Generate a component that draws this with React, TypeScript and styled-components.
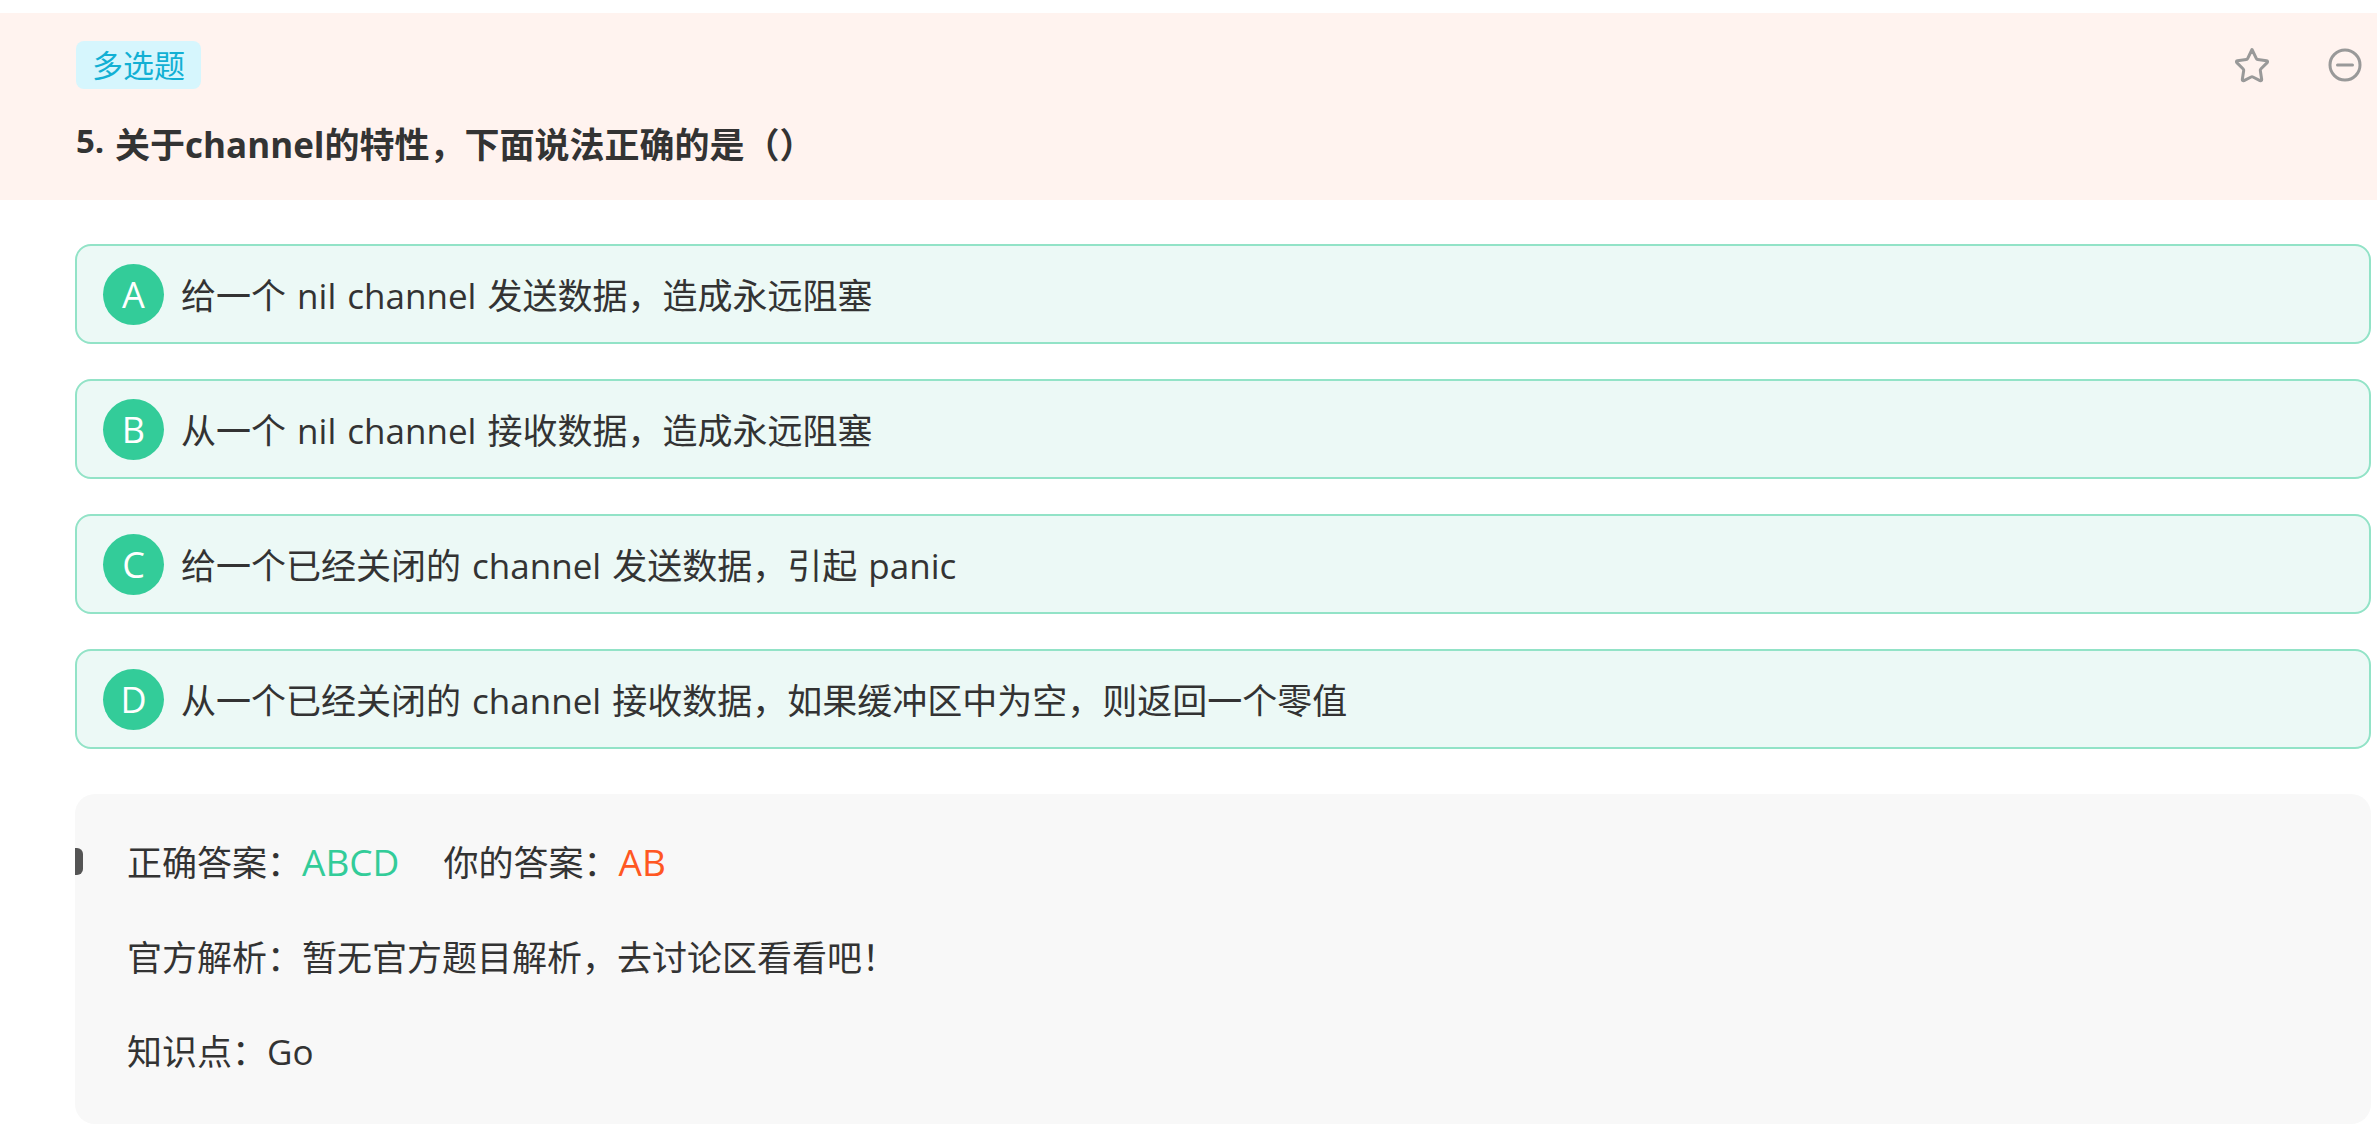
import React from "react";
import styled, { createGlobalStyle } from "styled-components";

const Global = createGlobalStyle`
  html, body { margin: 0; padding: 0; background: #fff; }
  body { font-family: "Open Sans", "Noto Sans CJK SC", sans-serif; color: #333; }
`;

const Page = styled.div`
  width: 2377px;
  height: 1129px;
  padding-top: 13px;
  box-sizing: border-box;
  overflow: hidden;
`;

const Header = styled.header`
  height: 187px;
  box-sizing: border-box;
  background: #fff3ef;
  padding: 28px 14px 0 76px;
`;

const TopRow = styled.div`
  display: flex;
  justify-content: space-between;
  align-items: flex-start;
`;

const Tag = styled.span`
  display: block;
  width: 125px;
  height: 48px;
  border-radius: 8px;
  background: #d6f6fd;
  color: #12b0d4;
  font-size: 31px;
  line-height: 49px;
  text-align: center;
`;

const Actions = styled.div`
  display: flex;
  gap: 57px;
  padding-top: 6px;
`;

const Icon = styled.svg`
  display: block;
  width: 36px;
  height: 36px;
  fill: none;
  stroke: #999;
  stroke-width: 3px;
  stroke-linecap: round;
  stroke-linejoin: round;
`;

const Title = styled.h2`
  display: flex;
  align-items: flex-start;
  margin: 32px 0 0;
  font-size: 35px;
  line-height: 48px;
  font-weight: 700;
  color: #333;
`;

const TitleNumber = styled.span`
  width: 39px;
  flex: none;
  margin-top: -4px;
  font-size: 33px;
`;

const Options = styled.div`
  display: flex;
  flex-direction: column;
  gap: 35px;
  margin: 44px 6px 0 75px;
`;

const Option = styled.div`
  display: flex;
  align-items: center;
  gap: 17px;
  height: 100px;
  box-sizing: border-box;
  padding-left: 26px;
  border: 2px solid #92e3c7;
  border-radius: 16px;
  background: #ecf9f6;
  font-size: 35px;
  word-spacing: 2px;
  color: #333;
`;

const Letter = styled.span`
  flex: none;
  width: 61px;
  height: 61px;
  border-radius: 50%;
  background: #33cc99;
  color: #fff;
  font-size: 36px;
  line-height: 61px;
  text-align: center;
`;

const OptionText = styled.span`
  padding-bottom: 2px;
`;

const Analysis = styled.section`
  position: relative;
  height: 330px;
  box-sizing: border-box;
  margin: 45px 6px 0 75px;
  padding: 42px 52px 0;
  border-radius: 20px;
  background: #f8f8f8;
  font-size: 35px;
  color: #333;
`;

const Handle = styled.span`
  position: absolute;
  left: 0;
  top: 54px;
  width: 8px;
  height: 27px;
  border-radius: 0 6px 6px 0;
  background: #555;
`;

const Line = styled.p`
  margin: 0 0 43.5px;
  line-height: 51px;
`;

const Answer = styled.span<{ $color: string }>`
  color: ${(p) => p.$color};
  font-size: 37px;
`;

const Spacer = styled.span`
  display: inline-block;
  width: 44px;
`;

const options = [
  ["A", "给一个 nil channel 发送数据，造成永远阻塞"],
  ["B", "从一个 nil channel 接收数据，造成永远阻塞"],
  ["C", "给一个已经关闭的 channel 发送数据，引起 panic"],
  ["D", "从一个已经关闭的 channel 接收数据，如果缓冲区中为空，则返回一个零值"],
];

export default function App() {
  return (
    <Page>
      <Global />
      <Header>
        <TopRow>
          <Tag>多选题</Tag>
          <Actions>
            <Icon viewBox="0 0 36 36">
              <path d="M18 2.5 L22.4 11.6 Q22.8 12.4 23.7 12.5 L32.6 13.8 Q34.2 14.2 33.2 15.6 L26.8 22 Q26.1 22.7 26.3 23.6 L27.7 32.4 Q27.8 34.2 26 33.6 L18.9 30 Q18 29.6 17.1 30 L10 33.6 Q8.2 34.2 8.3 32.4 L9.7 23.6 Q9.9 22.7 9.2 22 L2.8 15.6 Q1.8 14.2 3.4 13.8 L12.3 12.5 Q13.2 12.4 13.6 11.6 Z" />
            </Icon>
            <Icon viewBox="0 0 36 36">
              <circle cx="18" cy="18" r="15" />
              <path d="M10.5 18 H25.5" />
            </Icon>
          </Actions>
        </TopRow>
        <Title>
          <TitleNumber>5.</TitleNumber>
          <span>关于channel的特性，下面说法正确的是（）</span>
        </Title>
      </Header>
      <Options>
        {options.map(([letter, text]) => (
          <Option key={letter}>
            <Letter>{letter}</Letter>
            <OptionText>{text}</OptionText>
          </Option>
        ))}
      </Options>
      <Analysis>
        <Handle />
        <Line>
          正确答案：<Answer $color="#33cc99">ABCD</Answer>
          <Spacer />
          你的答案：<Answer $color="#ff5722">AB</Answer>
        </Line>
        <Line>官方解析：暂无官方题目解析，去讨论区看看吧！</Line>
        <Line>知识点：Go</Line>
      </Analysis>
    </Page>
  );
}
